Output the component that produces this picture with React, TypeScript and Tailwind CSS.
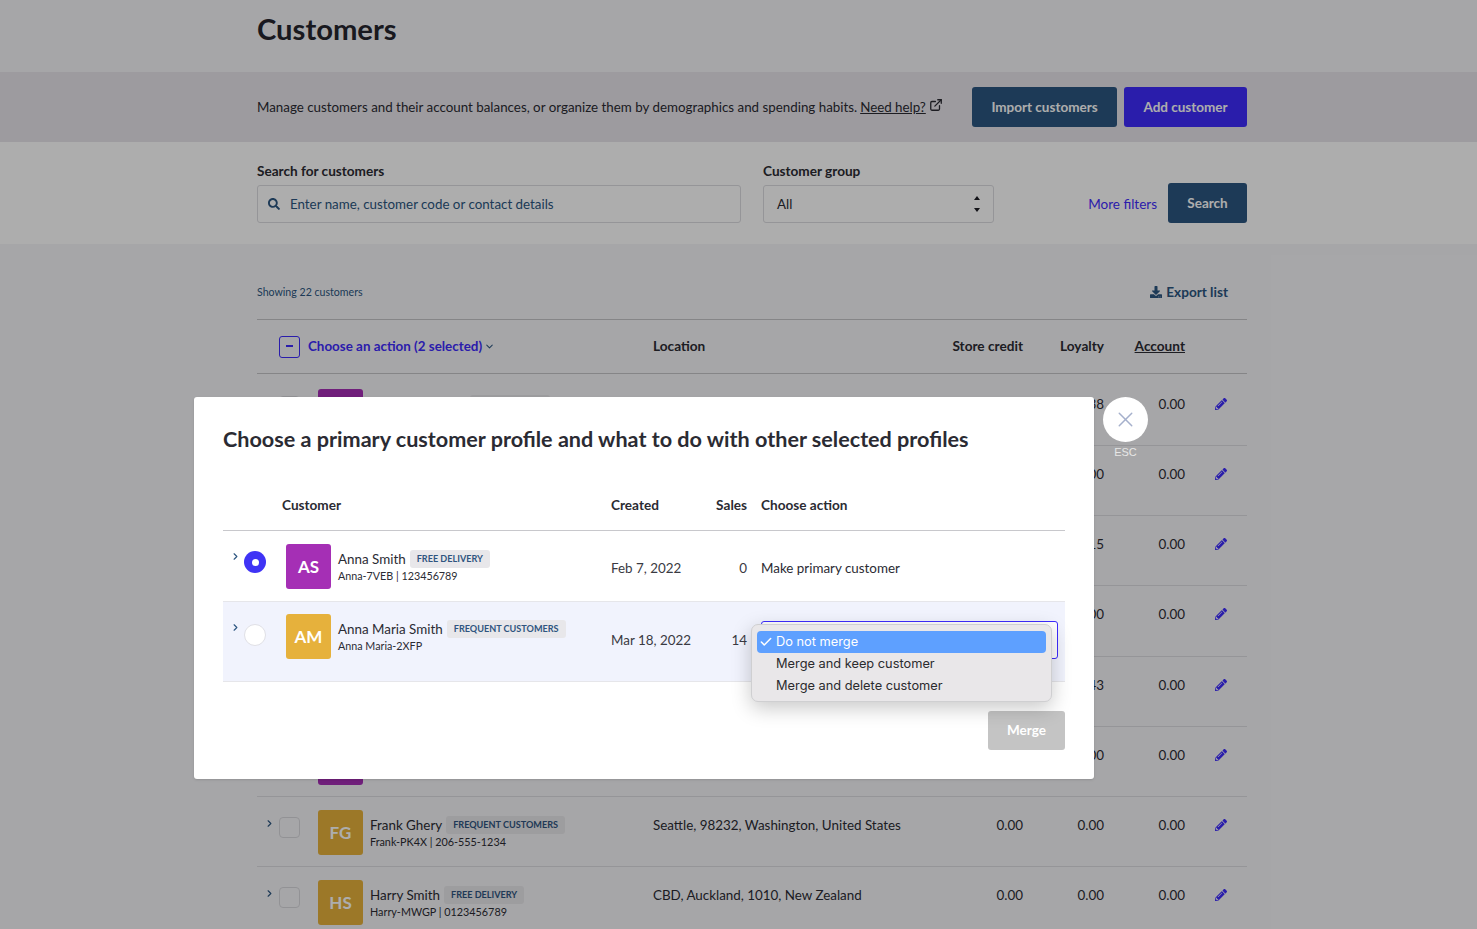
import { Check, ChevronDown, ChevronRight, ExternalLink, X } from "lucide-react";
import { FaDownload, FaPencilAlt, FaSearch } from "react-icons/fa";

type Row = {
  initials: string;
  color: string;
  name: string;
  badge: string;
  sub: string;
  location: string;
  credit: string;
  loyalty: string;
};

const rows: Row[] = [
  { initials: "AS", color: "bg-[#a52fb5]", name: "Alexander Smith", badge: "FREE DELIVERY", sub: "Alexander-7VEB | 123456789", location: "Auckland, New Zealand", credit: "0.00", loyalty: "12.38" },
  { initials: "AM", color: "bg-[#e6b13c]", name: "Anna Maria Smith", badge: "FREQUENT CUSTOMERS", sub: "Anna Maria-2XFP", location: "Auckland, New Zealand", credit: "0.00", loyalty: "0.00" },
  { initials: "BS", color: "bg-[#3f8fd8]", name: "Ben Stone", badge: "FREE DELIVERY", sub: "Ben-4RTY | 123456789", location: "Auckland, New Zealand", credit: "0.00", loyalty: "3.15" },
  { initials: "CB", color: "bg-[#e6b13c]", name: "Carl Brown", badge: "FREE DELIVERY", sub: "Carl-9HJK | 123456789", location: "Seattle, Washington", credit: "0.00", loyalty: "0.00" },
  { initials: "DL", color: "bg-[#3f8fd8]", name: "Dana Lee", badge: "FREE DELIVERY", sub: "Dana-3LPQ | 123456789", location: "Seattle, Washington", credit: "0.00", loyalty: "6.43" },
  { initials: "EM", color: "bg-[#a52fb5]", name: "Emma Moore", badge: "FREE DELIVERY", sub: "Emma-8ZXC | 123456789", location: "Seattle, Washington", credit: "0.00", loyalty: "0.00" },
  { initials: "FG", color: "bg-[#e6b13c]", name: "Frank Ghery", badge: "FREQUENT CUSTOMERS", sub: "Frank-PK4X | 206-555-1234", location: "Seattle, 98232, Washington, United States", credit: "0.00", loyalty: "0.00" },
  { initials: "HS", color: "bg-[#e6b13c]", name: "Harry Smith", badge: "FREE DELIVERY", sub: "Harry-MWGP | 0123456789", location: "CBD, Auckland, 1010, New Zealand", credit: "0.00", loyalty: "0.00" },
];

function Badge({ children }: { children: string }) {
  return (
    <span className="ml-[4px] flex h-[18px] items-center whitespace-nowrap rounded-[3px] bg-[#e8e7ea] px-[7px] text-[9.1px] font-bold text-[#2f5580]">
      {children}
    </span>
  );
}

function CustomerRow({ row }: { row: Row }) {
  return (
    <div className="flex h-[70.25px] items-start border-b border-[#dcdce0] pt-[13px] text-[13.4px] text-[#2b2b33]">
      <ChevronRight className="ml-[7px] mt-[8px] h-[11px] w-[11px] shrink-0 text-[#2c5680]" strokeWidth={2.5} />
      <span className="ml-[4px] mt-[7px] h-[21px] w-[21px] shrink-0 rounded-[4px] border border-[#d8d8dc] bg-[#f5f5f8]" />
      <span className={`ml-[18px] flex h-[45px] w-[45px] shrink-0 items-center justify-center rounded-[3px] text-[17px] font-bold text-white ${row.color}`}>
        {row.initials}
      </span>
      <div className="ml-[7px] w-[283px]">
        <div className="mt-[6px] flex h-[18px] items-center">
          <span>{row.name}</span>
          <Badge>{row.badge}</Badge>
        </div>
        <div className="text-[10.8px] leading-[16px]">{row.sub}</div>
      </div>
      <span className="mt-[5px] w-[300px]">{row.location}</span>
      <span className="mt-[5px] w-[70px] text-right">{row.credit}</span>
      <span className="mt-[5px] w-[81px] text-right">{row.loyalty}</span>
      <span className="mt-[5px] w-[81px] text-right">0.00</span>
      <FaPencilAlt className="ml-[30px] mt-[9px] h-[12px] w-[12px] text-[#3e2cfd]" />
    </div>
  );
}

function ModalRow({
  initials,
  color,
  name,
  badge,
  sub,
  date,
  sales,
  selected,
  children,
}: {
  initials: string;
  color: string;
  name: string;
  badge: string;
  sub: string;
  date: string;
  sales: string;
  selected?: boolean;
  children: React.ReactNode;
}) {
  return (
    <div className={`flex items-start border-b border-[#e6e6ea] text-[13.4px] ${selected ? "h-[71px] pt-[13px]" : "h-[80px] bg-[#f1f3fd] pt-[12px]"}`}>
      <ChevronRight className={`ml-[7px] h-[11px] w-[11px] shrink-0 text-[#2c5680] ${selected ? "mt-[7px]" : "mt-[8px]"}`} strokeWidth={2.5} />
      <span
        className={
          selected
            ? "ml-[3px] mt-[7px] flex h-[22px] w-[22px] shrink-0 items-center justify-center rounded-full bg-[#3f33f5]"
            : "ml-[3px] mt-[10px] h-[22px] w-[22px] shrink-0 rounded-full border border-[#e0e0e6] bg-white"
        }
      >
        {selected ? <span className="h-[7px] w-[7px] rounded-full bg-white" /> : null}
      </span>
      <span className={`ml-[20px] flex h-[45px] w-[45px] shrink-0 items-center justify-center rounded-[3px] text-[17px] font-bold text-white ${color}`}>
        {initials}
      </span>
      <div className="ml-[7px] w-[273px] text-[#2b2b33]">
        <div className="mt-[6px] flex h-[18px] items-center">
          <span>{name}</span>
          <Badge>{badge}</Badge>
        </div>
        <div className="text-[10.75px] leading-[16px]">{sub}</div>
      </div>
      <span className={`w-[100px] text-[#3a3a42] ${selected ? "mt-[14px]" : "mt-[16px]"}`}>{date}</span>
      <span className={`w-[36px] text-right text-[#3a3a42] ${selected ? "mt-[14px]" : "mt-[16px]"}`}>{sales}</span>
      {children}
    </div>
  );
}

export default function App() {
  return (
    <div className="relative h-[929px] overflow-hidden bg-[#f5f5f8] font-['Lato',sans-serif] text-[#1c1c24]">
      <div className="h-[72px] pl-[257px] pt-[8px]">
        <h1 className="text-[29.2px] font-bold leading-[42px] text-[#26262e]">Customers</h1>
      </div>

      <div className="flex h-[70px] items-center bg-[#e8e5ea] pl-[257px]">
        <div className="flex w-[990px] items-center justify-between">
          <p className="flex items-center whitespace-nowrap text-[13.35px] text-[#2b2b33]">
            Manage customers and their account balances, or organize them by demographics and spending habits.
            <span className="ml-[3px] underline">Need help?</span>
            <ExternalLink className="ml-[3px] mb-[3px] h-[14px] w-[14px]" strokeWidth={2.2} />
          </p>
          <div className="flex gap-[7px]">
            <button className="h-[40px] w-[145px] rounded-[3px] bg-[#2c5680] text-[13.5px] font-bold text-white">Import customers</button>
            <button className="h-[40px] w-[123px] rounded-[3px] bg-[#3e2cfd] text-[13.5px] font-bold text-white">Add customer</button>
          </div>
        </div>
      </div>

      <div className="h-[102px] bg-white pl-[257px] pt-[20px]">
        <div className="flex w-[990px] items-end">
          <div className="w-[484px]">
            <div className="mb-[5px] text-[13.6px] font-bold leading-[18px] text-[#2b2b33]">Search for customers</div>
            <div className="flex h-[38px] items-center rounded-[3px] border border-[#dcdce0] pl-[10px] text-[13.35px] text-[#2c5680]">
              <FaSearch className="mr-[10px] h-[12px] w-[12px]" />
              Enter name, customer code or contact details
            </div>
          </div>
          <div className="ml-[22px] w-[231px]">
            <div className="mb-[5px] text-[13.6px] font-bold leading-[18px] text-[#2b2b33]">Customer group</div>
            <div className="flex h-[38px] items-center justify-between rounded-[3px] border border-[#dcdce0] pl-[13px] pr-[12px] text-[13.4px] text-[#2b2b33]">
              All
              <svg viewBox="0 0 8 18" className="h-[18px] w-[8px] fill-[#1c1c24]">
                <path d="M4 1 7 5H1zM4 17 1 13h6z" />
              </svg>
            </div>
          </div>
          <a className="ml-auto mb-[9px] text-[13.5px] text-[#3e2cfd]">More filters</a>
          <button className="ml-[11px] h-[40px] w-[79px] rounded-[3px] bg-[#2c5680] text-[13.5px] font-bold text-white">Search</button>
        </div>
      </div>

      <div className="ml-[257px] w-[990px]">
        <div className="flex h-[75px] items-center justify-between pt-[22px] pr-[19px]">
          <span className="mt-[1px] text-[10.6px] text-[#2c5680]">Showing 22 customers</span>
          <span className="flex items-center text-[13.6px] font-bold text-[#2c5680]">
            <FaDownload className="mr-[4px] h-[12px] w-[12px]" />
            Export list
          </span>
        </div>
        <div className="flex h-[55px] items-center whitespace-nowrap border-y border-[#c4c4c8] text-[13.65px] font-bold text-[#2b2b33]">
          <span className="ml-[22px] flex h-[22px] w-[21px] items-center justify-center rounded-[3px] border border-[#3e2cfd]">
            <span className="mb-[2px] h-[2px] w-[7px] bg-[#3e2cfd]" />
          </span>
          <span className="ml-[8px] flex w-[345px] items-center text-[13.4px] text-[#3e2cfd]">
            Choose an action (2 selected)
            <ChevronDown className="ml-[2px] h-[11px] w-[11px] text-[#2c5680]" strokeWidth={2.2} />
          </span>
          <span className="w-[298px]">Location</span>
          <span className="w-[72px] text-right">Store credit</span>
          <span className="w-[81px] text-right">Loyalty</span>
          <span className="w-[81px] text-right underline">Account</span>
        </div>
        <div className="mt-[1.5px]">
          {rows.map((row) => (
            <CustomerRow key={row.initials} row={row} />
          ))}
        </div>
      </div>

      <div className="absolute inset-0 bg-black/32" />

      <div className="absolute left-[194px] top-[397px] flex items-start">
        <div className="h-[382px] w-[900px] rounded-[3px] bg-white px-[29px] pt-[26px] shadow-sm">
          <h2 className="text-[21.6px] font-bold leading-[32px] text-[#2b2b33]">
            Choose a primary customer profile and what to do with other selected profiles
          </h2>
          <div className="mt-[25px] flex h-[51px] items-start border-b border-[#c8c8cc] pt-[15px] text-[13.6px] font-bold text-[#2b2b33]">
            <span className="ml-[59px] w-[329px]">Customer</span>
            <span className="w-[100px]">Created</span>
            <span className="w-[36px] text-right">Sales</span>
            <span className="ml-[14px]">Choose action</span>
          </div>
          <ModalRow initials="AS" color="bg-[#a52fb5]" name="Anna Smith" badge="FREE DELIVERY" sub="Anna-7VEB | 123456789" date="Feb 7, 2022" sales="0" selected>
            <span className="ml-[14px] mt-[14px] text-[#2b2b33]">Make primary customer</span>
          </ModalRow>
          <ModalRow initials="AM" color="bg-[#e6b13c]" name="Anna Maria Smith" badge="FREQUENT CUSTOMERS" sub="Anna Maria-2XFP" date="Mar 18, 2022" sales="14">
            <div className="relative ml-[14px] mt-[7px] h-[38px] w-[297px] rounded-[3px] border border-[#3e2cfd] bg-white">
              <div className="absolute left-[-11px] top-[2px] z-10 w-[301px] rounded-[7px] border border-[#cfcfd1] bg-[#e9e7e9] px-[5px] pb-[4px] pt-[6px] font-['Inter',sans-serif] text-[12.8px] text-[#2b2b2e] shadow-[0_6px_20px_rgba(0,0,0,0.22)]">
                <div className="flex h-[22px] items-center rounded-[4px] bg-[#5ea0ff] text-white">
                  <Check className="ml-[2px] mr-[3px] h-[14px] w-[14px]" strokeWidth={2.6} />
                  Do not merge
                </div>
                <div className="flex h-[22px] items-center pl-[19px]">Merge and keep customer</div>
                <div className="flex h-[22px] items-center pl-[19px]">Merge and delete customer</div>
              </div>
            </div>
          </ModalRow>
          <div className="mt-[29px] flex justify-end">
            <button className="h-[39px] w-[77px] rounded-[3px] bg-[#c4c4c4] text-[13.5px] font-bold text-white">Merge</button>
          </div>
        </div>
        <div className="ml-[9px] flex flex-col items-center">
          <span className="flex h-[45px] w-[45px] items-center justify-center rounded-full bg-white">
            <X className="h-[25px] w-[25px] text-[#a5b0cc]" strokeWidth={1.4} />
          </span>
          <span className="mt-[4px] font-['Liberation_Sans',sans-serif] text-[11px] leading-[13px] text-[#e6e6e6]">ESC</span>
        </div>
      </div>
    </div>
  );
}
